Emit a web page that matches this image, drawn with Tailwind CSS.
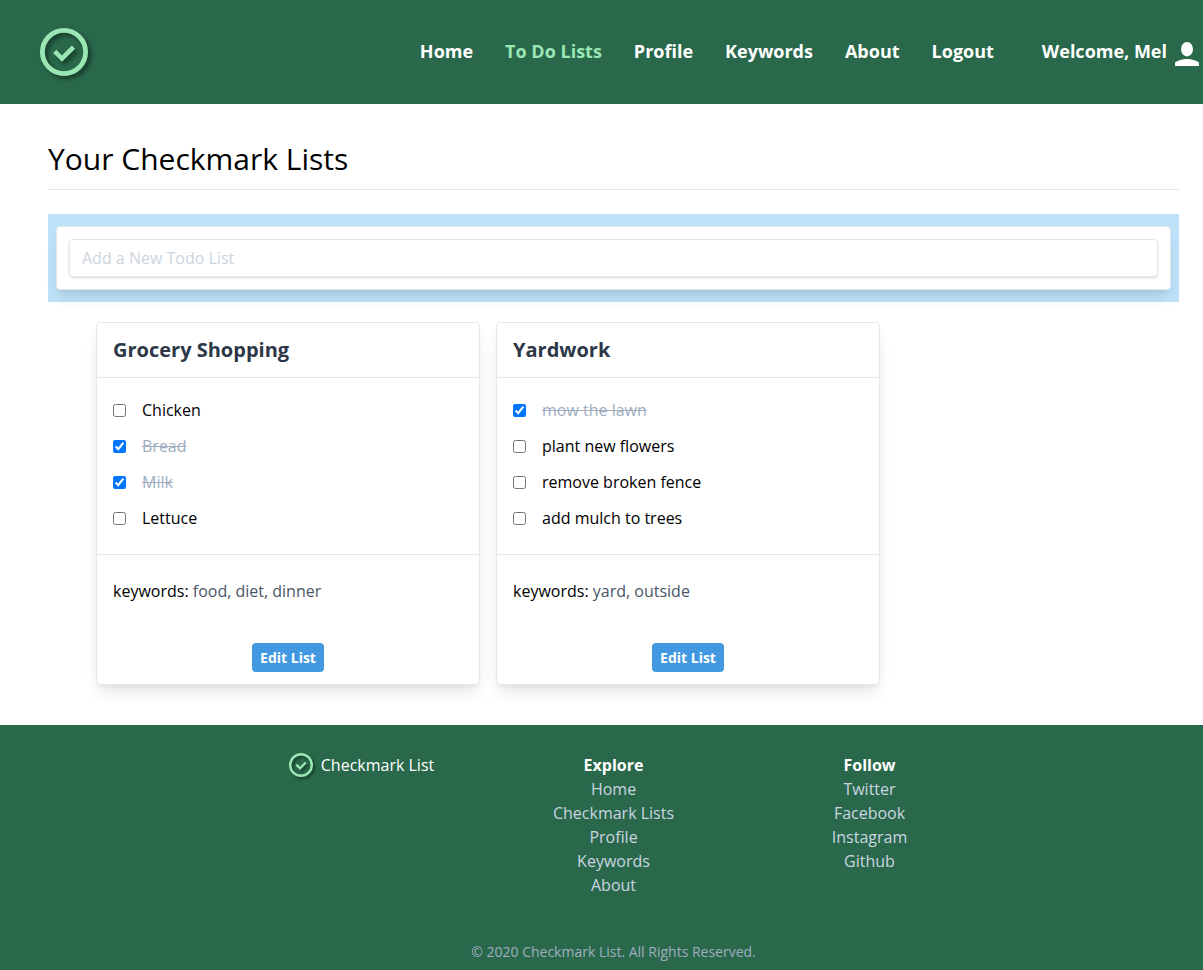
<!DOCTYPE html>
<html lang="en">
<head>
<meta charset="utf-8">
<meta name="viewport" content="width=device-width, initial-scale=1">
<title>Checkmark List</title>
<script src="https://cdn.jsdelivr.net/npm/@tailwindcss/browser@4"></script>
</head>
<body class="flex min-h-screen flex-col bg-white font-['Open_Sans',sans-serif] text-base text-black">
<header class="flex h-26 items-center justify-between bg-[#29684b] pl-10 pr-1">
  <a href="#" aria-label="Checkmark List">
    <svg class="size-12 overflow-visible drop-shadow-[3px_3px_2px_rgba(0,0,0,0.45)]" viewBox="0 0 48 48" fill="none" stroke="#9ae6b4"><circle cx="24" cy="24" r="21.600" stroke-width="4.800"/><path d="M14.700 23.300 22 30.600 33.500 19.100" stroke-width="4.600"/></svg>
  </a>
  <div class="flex items-center gap-12 text-lg leading-[26px] font-bold text-white">
    <nav class="flex gap-8 pb-0.5">
      <a href="#">Home</a>
      <a href="#" class="text-[#9ae6b4]">To Do Lists</a>
      <a href="#">Profile</a>
      <a href="#">Keywords</a>
      <a href="#">About</a>
      <a href="#">Logout</a>
    </nav>
    <div class="flex items-center gap-2">
      <span class="pb-0.5">Welcome, Mel</span>
      <svg class="mt-1 size-6" viewBox="0 0 24 24" fill="#fff" aria-hidden="true"><ellipse cx="12" cy="7.200" rx="6" ry="7.200"/><path d="M0 24v-3.500C3 18.500 7 17 12 17s9 1.500 12 3.500V24z"/></svg>
    </div>
  </div>
</header>

<main class="grow pl-12 pr-6 pt-8 pb-10">
  <h1 class="mb-6 border-b border-[#e2e8f0] pb-2 text-3xl leading-[45px]">Your Checkmark Lists</h1>
  <form class="bg-[#bee3f8] px-2 py-3">
    <div class="rounded border border-[#e2e8f0] bg-white p-3 shadow-[0_10px_15px_-3px_rgba(0,0,0,0.1),0_4px_6px_-2px_rgba(0,0,0,0.05)]">
      <input type="text" aria-label="Add a New Todo List" placeholder="Add a New Todo List" class="block h-[38px] w-full rounded border border-[#e2e8f0] px-3 shadow-[0_1px_3px_rgba(0,0,0,0.1),0_1px_2px_rgba(0,0,0,0.06)] placeholder:text-[#cbd5e0]">
    </div>
  </form>

  <div class="mt-5 flex flex-wrap gap-4 pl-12">
    <section class="w-96 rounded border border-[#e2e8f0] bg-white shadow-[0_10px_15px_-3px_rgba(0,0,0,0.1),0_4px_6px_-2px_rgba(0,0,0,0.05)]">
      <h2 class="border-b border-[#e2e8f0] px-4 py-3 text-xl leading-[30px] font-bold text-[#2d3748]">Grocery Shopping</h2>
      <ul class="flex flex-col gap-3 border-b border-[#e2e8f0] px-4 pt-5 pb-6">
        <li><label class="flex items-center gap-4"><input type="checkbox" class="peer size-[13px]"><span class="peer-checked:text-[#a0aec0] peer-checked:line-through">Chicken</span></label></li>
        <li><label class="flex items-center gap-4"><input type="checkbox" checked class="peer size-[13px]"><span class="peer-checked:text-[#a0aec0] peer-checked:line-through">Bread</span></label></li>
        <li><label class="flex items-center gap-4"><input type="checkbox" checked class="peer size-[13px]"><span class="peer-checked:text-[#a0aec0] peer-checked:line-through">Milk</span></label></li>
        <li><label class="flex items-center gap-4"><input type="checkbox" class="peer size-[13px]"><span class="peer-checked:text-[#a0aec0] peer-checked:line-through">Lettuce</span></label></li>
      </ul>
      <div class="px-4 pt-6 pb-3">
        <p>keywords: <span class="text-[#4a5568]">food, diet, dinner</span></p>
        <div class="mt-10 flex justify-center"><button type="button" class="rounded bg-[#4299e1] px-2 py-1 text-sm leading-[21px] font-bold text-white">Edit List</button></div>
      </div>
    </section>
    <section class="w-96 rounded border border-[#e2e8f0] bg-white shadow-[0_10px_15px_-3px_rgba(0,0,0,0.1),0_4px_6px_-2px_rgba(0,0,0,0.05)]">
      <h2 class="border-b border-[#e2e8f0] px-4 py-3 text-xl leading-[30px] font-bold text-[#2d3748]">Yardwork</h2>
      <ul class="flex flex-col gap-3 border-b border-[#e2e8f0] px-4 pt-5 pb-6">
        <li><label class="flex items-center gap-4"><input type="checkbox" checked class="peer size-[13px]"><span class="peer-checked:text-[#a0aec0] peer-checked:line-through">mow the lawn</span></label></li>
        <li><label class="flex items-center gap-4"><input type="checkbox" class="peer size-[13px]"><span class="peer-checked:text-[#a0aec0] peer-checked:line-through">plant new flowers</span></label></li>
        <li><label class="flex items-center gap-4"><input type="checkbox" class="peer size-[13px]"><span class="peer-checked:text-[#a0aec0] peer-checked:line-through">remove broken fence</span></label></li>
        <li><label class="flex items-center gap-4"><input type="checkbox" class="peer size-[13px]"><span class="peer-checked:text-[#a0aec0] peer-checked:line-through">add mulch to trees</span></label></li>
      </ul>
      <div class="px-4 pt-6 pb-3">
        <p>keywords: <span class="text-[#4a5568]">yard, outside</span></p>
        <div class="mt-10 flex justify-center"><button type="button" class="rounded bg-[#4299e1] px-2 py-1 text-sm leading-[21px] font-bold text-white">Edit List</button></div>
      </div>
    </section>
  </div>
</main>

<footer class="bg-[#29684b] pt-7 pr-6 pb-2 pl-12 text-center text-[#cbd5e0]">
  <div class="mx-auto grid max-w-3xl grid-cols-3">
    <a href="#" class="flex h-6 items-center justify-center gap-2 pl-2 text-white">
      <svg class="size-6 overflow-visible drop-shadow-[2px_2px_1px_rgba(0,0,0,0.4)]" viewBox="0 0 48 48" fill="none" stroke="#9ae6b4" aria-hidden="true"><circle cx="24" cy="24" r="21.600" stroke-width="4.800"/><path d="M14.700 23.300 22 30.600 33.500 19.100" stroke-width="4.600"/></svg>
      <span>Checkmark List</span>
    </a>
    <div>
      <h3 class="font-bold text-white">Explore</h3>
      <ul>
        <li><a href="#">Home</a></li>
        <li><a href="#">Checkmark Lists</a></li>
        <li><a href="#">Profile</a></li>
        <li><a href="#">Keywords</a></li>
        <li><a href="#">About</a></li>
      </ul>
    </div>
    <div>
      <h3 class="font-bold text-white">Follow</h3>
      <ul>
        <li><a href="#">Twitter</a></li>
        <li><a href="#">Facebook</a></li>
        <li><a href="#">Instagram</a></li>
        <li><a href="#">Github</a></li>
      </ul>
    </div>
  </div>
  <p class="mt-11 text-sm leading-[21px] text-[#a0aec0]">© 2020 Checkmark List. All Rights Reserved.</p>
</footer>
</body>
</html>
